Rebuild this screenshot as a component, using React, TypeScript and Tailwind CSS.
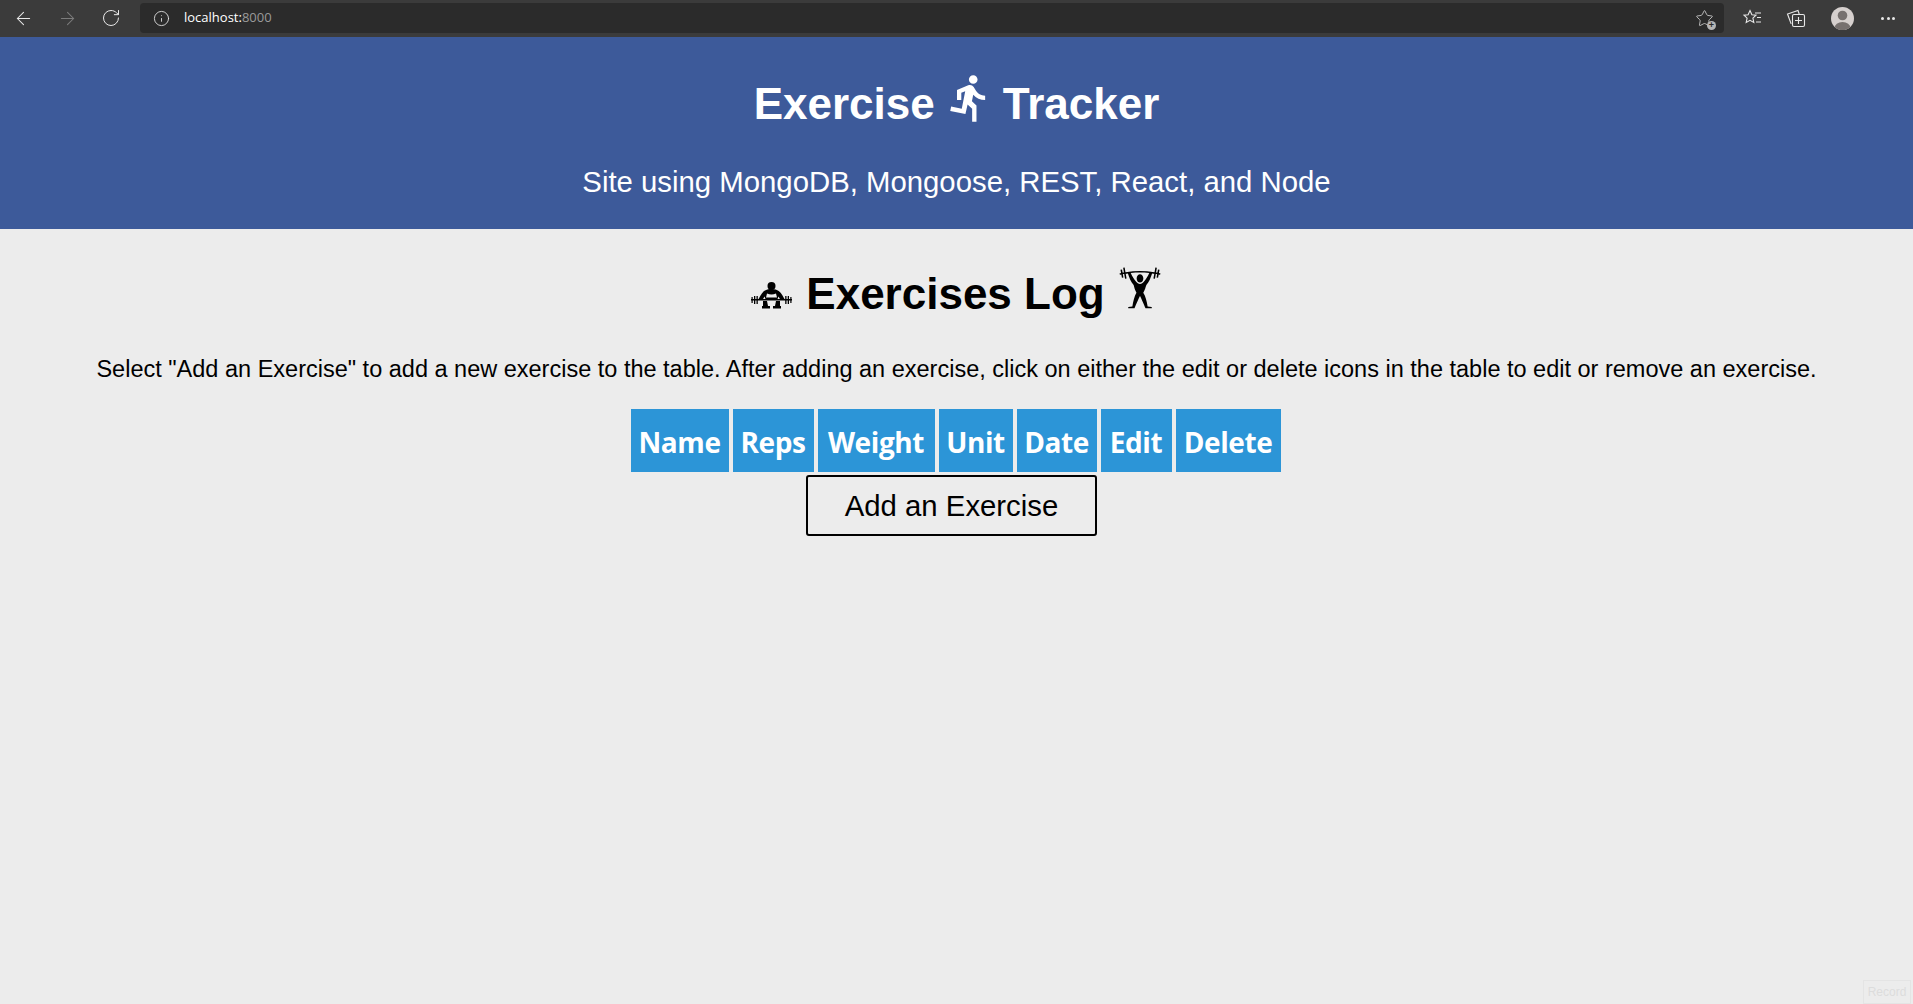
import { ArrowLeft, ArrowRight, Info, RotateCw, Star } from 'lucide-react';
import { GiWeightLiftingUp } from 'react-icons/gi';
import { MdDirectionsRun } from 'react-icons/md';

const columns = [
  { label: 'Name', width: 'w-[98px]' },
  { label: 'Reps', width: 'w-[81px]' },
  { label: 'Weight', width: 'w-[117px]' },
  { label: 'Unit', width: 'w-[74px]' },
  { label: 'Date', width: 'w-[80px]' },
  { label: 'Edit', width: 'w-[71px]' },
  { label: 'Delete', width: 'w-[105px]' },
];

function SquatIcon() {
  return (
    <svg className="mt-[4px] mr-[13px]" width="42" height="28" viewBox="0 0 42 28" fill="currentColor">
      <circle cx="20.5" cy="4" r="4" />
      <path
        fillRule="evenodd"
        d="M20.500 7C14 7 11.500 10 9.500 13.500L7 18h4.500l2-3.500 1 2.500h12l1-2.500 2 3.500H34l-2.500-4.500C29.500 10 27 7 20.500 7zM16 11.500c3 1.200 6 1.200 9 0l1 4H15z"
      />
      <path d="M12 19h4l1 5h2v2.500h-8V24h1zM25 19h4l-0 5h1v2.500h-8V24h2z" />
      <rect x="0" y="17" width="41" height="1.500" />
      <rect x="0.500" y="15" width="1.200" height="6" />
      <rect x="3" y="14" width="1.300" height="8" />
      <rect x="5.500" y="14" width="1.300" height="8" />
      <rect x="34.200" y="14" width="1.300" height="8" />
      <rect x="36.700" y="14" width="1.300" height="8" />
      <rect x="39.300" y="15" width="1.200" height="6" />
    </svg>
  );
}

function BrowserBar() {
  return (
    <div className="flex h-[37px] items-center bg-[#3b3b3b] pb-[1px] text-[#e8e8e8]">
      <div className="flex w-[140px] shrink-0 items-center gap-[23px] pl-[13px]">
        <ArrowLeft size={21} strokeWidth={1.2} />
        <ArrowRight size={21} strokeWidth={1.2} className="text-[#7c7c7c]" />
        <RotateCw size={20} strokeWidth={1.2} />
      </div>
      <div className="flex h-[30px] flex-1 items-center justify-between rounded-[4px] bg-[#2b2b2b] pr-[10px] pl-[13px]">
        <div className="flex items-center gap-[14px] text-[13px] [font-family:'Open_Sans',sans-serif]">
          <Info size={17} strokeWidth={1.2} />
          <span>
            <span className="text-white">localhost:</span>
            <span className="text-[#9a9a9a]">8000</span>
          </span>
        </div>
        <div className="relative text-[#bdbdbd]">
          <Star size={19} strokeWidth={1.2} />
          <div className="absolute -right-[2px] -bottom-[2px] flex h-[9px] w-[9px] items-center justify-center rounded-full bg-[#b5b5b5] text-[9px] leading-none font-bold text-[#2b2b2b]">
            +
          </div>
        </div>
      </div>
      <div className="flex w-[189px] shrink-0 items-center pl-[18px]">
        <svg width="20" height="20" viewBox="0 0 20 20" fill="none" stroke="#e8e8e8" strokeWidth="1.1">
          <path d="M8 2.500l1.900 4.200 4.100.500-3.100 2.900.9 4.400L8 12.300l-3.800 2.200.9-4.400L2 7.200l4.100-.500z" />
          <path d="M13 5h6M15 9.500h4M14 14h5" />
        </svg>
        <svg className="ml-[24px]" width="20" height="20" viewBox="0 0 20 20" fill="none" stroke="#e8e8e8" strokeWidth="1.1">
          <path d="M5.500 15.500H5L1.500 6 12 2.500l1.200 3.500" />
          <rect x="6.500" y="6.500" width="12" height="12" rx="1.500" />
          <path d="M12.500 9v7M9 12.500h7" />
        </svg>
        <svg className="ml-[25px]" width="23" height="23" viewBox="0 0 23 23">
          <defs>
            <clipPath id="avatar">
              <circle cx="11.500" cy="11.500" r="11.500" />
            </clipPath>
          </defs>
          <circle cx="11.500" cy="11.500" r="11.500" fill="#d6d0ce" />
          <g clipPath="url(#avatar)" fill="#77716f">
            <circle cx="11.500" cy="8.500" r="4.800" />
            <ellipse cx="11.500" cy="21" rx="8" ry="6" />
          </g>
        </svg>
        <div className="ml-[27px] flex gap-[2.500px]">
          <div className="h-[3px] w-[3px] rounded-full bg-[#e8e8e8]" />
          <div className="h-[3px] w-[3px] rounded-full bg-[#e8e8e8]" />
          <div className="h-[3px] w-[3px] rounded-full bg-[#e8e8e8]" />
        </div>
      </div>
    </div>
  );
}

export default function App() {
  return (
    <div className="relative flex h-[1004px] flex-col overflow-hidden bg-[#ececec] text-center [font-family:'Liberation_Sans',Arial,sans-serif]">
      <BrowserBar />

      <header className="flex h-[192px] flex-col items-center bg-[#3d5a9a] text-white">
        <h1 className="mt-[42px] flex items-center text-[44px] leading-[50px] font-bold">
          Exercise
          <MdDirectionsRun size={52} className="mr-[7px] ml-[9px] -mt-[13px]" />
          Tracker
        </h1>
        <p className="mt-[36px] text-[29.33px] leading-[33px]">Site using MongoDB, Mongoose, REST, React, and Node</p>
      </header>

      <main className="flex flex-col items-center text-black">
        <h2 className="mt-[40px] flex items-center text-[44px] leading-[50px] font-bold">
          <SquatIcon />
          Exercises Log
          <GiWeightLiftingUp size={44} className="-mt-[12px] ml-[13px]" />
        </h2>
        <p className="mt-[36px] text-[23.5px] leading-[28px]">
          Select "Add an Exercise" to add a new exercise to the table. After adding an exercise, click on either the edit or delete icons in the table to edit or remove an exercise.
        </p>

        <table className="mt-[22px] mr-[2px] table-fixed border-separate border-spacing-[4px] [font-family:'Open_Sans',sans-serif]">
          <thead>
            <tr>
              {columns.map((col) => (
                <th key={col.label} className={`${col.width} h-[63px] bg-[#2c95d7] pt-[2px] text-[28px] font-bold tracking-[-0.4px] text-white`}>
                  {col.label}
                </th>
              ))}
            </tr>
          </thead>
        </table>

        <button className="mr-[10px] -mt-[1px] h-[61px] w-[291px] rounded-[3px] border-[2.5px] border-black text-[29.33px]">
          Add an Exercise
        </button>
      </main>

      <div className="absolute right-[2px] bottom-0 flex h-[24px] w-[48px] items-center justify-center border border-[#e4e4e4] text-[12px] text-[#dcdcdc]">
        Record
      </div>
    </div>
  );
}
